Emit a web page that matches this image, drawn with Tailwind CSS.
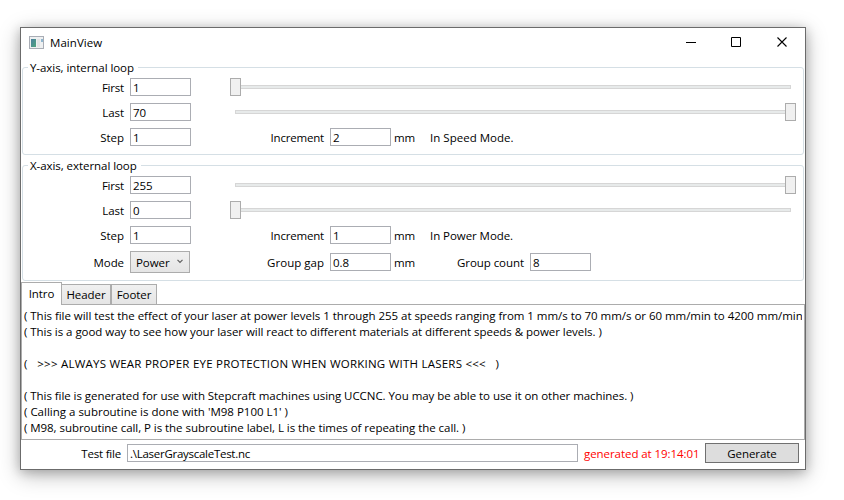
<!DOCTYPE html>
<html lang="en">
<head>
<meta charset="utf-8">
<title>MainView</title>
<script src="https://cdn.jsdelivr.net/npm/@tailwindcss/browser@4"></script>
</head>
<body class="bg-white w-[844px] h-[500px] overflow-hidden pt-[27px] pl-[20px] font-['Open_Sans','Noto_Sans',sans-serif] text-[11.5px] leading-[16px] tracking-[-0.06px] text-black">
<main class="w-[786px] h-[443px] border border-[#6b6b6b] bg-white flex flex-col shadow-[0_5px_20px_rgba(0,0,0,0.28),0_2px_10px_rgba(0,0,0,0.2)]">
  <header class="h-[32px] shrink-0 flex items-center pl-[8px]">
    <svg class="w-[15px] h-[13px] -mt-[4px]" viewBox="0 0 15 13"><defs><linearGradient id="g" x1="0" y1="0" x2="1" y2="1"><stop offset="0" stop-color="#4a7f9f"/><stop offset="1" stop-color="#4fa57c"/></linearGradient></defs><rect x=".5" y=".5" width="14" height="12" fill="#eef0f1" stroke="#a9adb5"/><rect x="2" y="3" width="5" height="8" fill="url(#g)"/><rect x="8" y="3" width="3" height="8" fill="#e2e4e5"/><rect x="12" y="3" width="2" height="3" fill="#8fb6cf"/></svg>
    <h1 class="ml-[6px] -mt-[2px] tracking-[0.05px]">MainView</h1>
    <div class="ml-auto mr-[17px] -mt-[4px] flex gap-[35px]">
      <svg class="w-[11px] h-[11px] -mr-px" viewBox="0 0 11 11"><path d="M0 5.5h10" stroke="#000"/></svg>
      <svg class="w-[11px] h-[11px]" viewBox="0 0 11 11"><path d="M.5 .5h9v9h-9z" fill="none" stroke="#000"/></svg>
      <svg class="w-[11px] h-[11px]" viewBox="0 0 11 11"><path d="M.5 .5l9 9M9.5 .5l-9 9" fill="none" stroke="#000" stroke-width="1.1"/></svg>
    </div>
  </header>

  <fieldset class="h-[95px] shrink-0 mx-[1px] border border-[#d5dfe5] rounded-[3px] min-w-0">
    <legend class="ml-[5px] w-[110px] h-[15px] pl-[2px] whitespace-nowrap">Y-axis, internal loop</legend>
    <div class="pt-[3px] flex flex-col gap-[7px]">
      <div class="flex items-center h-[18px]">
        <span class="w-[101px] pt-[2px] text-right tracking-[-0.2px]">First</span>
        <span class="ml-[6px] w-[61px] h-[18px] border border-[#abadb3] pl-[2px] leading-[17px]">1</span>
        <span class="ml-[39px] w-[566px] h-[18px] flex items-center"><i class="w-[11px] h-[18px] bg-[#f0f0f0] border border-[#acacac]"></i><i class="w-[550px] h-[4px] bg-[#e7eaea] border border-[#d6d6d6] border-l-0"></i></span>
      </div>
      <div class="flex items-center h-[18px]">
        <span class="w-[101px] pt-[2px] text-right">Last</span>
        <span class="ml-[6px] w-[61px] h-[18px] border border-[#abadb3] pl-[2px] leading-[17px]">70</span>
        <span class="ml-[39px] w-[566px] h-[18px] flex items-center justify-end"><i class="w-[550px] h-[4px] bg-[#e7eaea] border border-[#d6d6d6] border-r-0"></i><i class="w-[11px] h-[18px] bg-[#f0f0f0] border border-[#acacac]"></i></span>
      </div>
      <div class="flex items-center h-[18px]">
        <span class="w-[101px] pt-[2px] text-right">Step</span>
        <span class="ml-[6px] w-[61px] h-[18px] border border-[#abadb3] pl-[2px] leading-[17px]">1</span>
        <span class="w-[133px] pt-[2px] text-right tracking-[-0.2px]">Increment</span>
        <span class="ml-[6px] w-[61px] h-[18px] border border-[#abadb3] pl-[2px] leading-[17px]">2</span>
        <span class="pl-[3px] pt-[2px] w-[39px]">mm</span>
        <span class="pt-[2px] tracking-[0.02px]">In Speed Mode.</span>
      </div>
    </div>
  </fieldset>

  <fieldset class="h-[123px] shrink-0 mx-[1px] mt-[3px] border border-[#d5dfe5] rounded-[3px] min-w-0">
    <legend class="ml-[5px] w-[113px] h-[15px] pl-[2px] whitespace-nowrap">X-axis, external loop</legend>
    <div class="pt-[3px] flex flex-col gap-[7px]">
      <div class="flex items-center h-[18px]">
        <span class="w-[101px] pt-[2px] text-right tracking-[-0.2px]">First</span>
        <span class="ml-[6px] w-[61px] h-[18px] border border-[#abadb3] pl-[2px] leading-[17px]">255</span>
        <span class="ml-[39px] w-[566px] h-[18px] flex items-center justify-end"><i class="w-[550px] h-[4px] bg-[#e7eaea] border border-[#d6d6d6] border-r-0"></i><i class="w-[11px] h-[18px] bg-[#f0f0f0] border border-[#acacac]"></i></span>
      </div>
      <div class="flex items-center h-[18px]">
        <span class="w-[101px] pt-[2px] text-right">Last</span>
        <span class="ml-[6px] w-[61px] h-[18px] border border-[#abadb3] pl-[2px] leading-[17px]">0</span>
        <span class="ml-[39px] w-[566px] h-[18px] flex items-center"><i class="w-[11px] h-[18px] bg-[#f0f0f0] border border-[#acacac]"></i><i class="w-[550px] h-[4px] bg-[#e7eaea] border border-[#d6d6d6] border-l-0"></i></span>
      </div>
      <div class="flex items-center h-[18px]">
        <span class="w-[101px] pt-[2px] text-right">Step</span>
        <span class="ml-[6px] w-[61px] h-[18px] border border-[#abadb3] pl-[2px] leading-[17px]">1</span>
        <span class="w-[133px] pt-[2px] text-right tracking-[-0.2px]">Increment</span>
        <span class="ml-[6px] w-[61px] h-[18px] border border-[#abadb3] pl-[2px] leading-[17px]">1</span>
        <span class="pl-[3px] pt-[2px] w-[39px]">mm</span>
        <span class="pt-[2px]">In Power Mode.</span>
      </div>
      <div class="flex items-center h-[22px]">
        <span class="w-[101px] pt-[2px] text-right">Mode</span>
        <span class="ml-[6px] w-[60px] h-[22px] border border-[#acacac] bg-linear-to-b from-[#f0f0f0] to-[#e5e5e5] pl-[5px] pt-[2px] flex items-center">Power<svg class="ml-auto mr-[6px] mb-[4px] w-[6px] h-[5px]" viewBox="0 0 6 5"><path d="M.5 .8L3 3.4 5.5 .8" fill="none" stroke="#606060" stroke-width="1.2"/></svg></span>
        <span class="w-[134px] pt-[2px] text-right tracking-[0.02px]">Group gap</span>
        <span class="ml-[6px] w-[61px] h-[18px] border border-[#abadb3] pl-[2px] leading-[17px]">0.8</span>
        <span class="pl-[3px] pt-[2px] w-[39px]">mm</span>
        <span class="w-[94px] pt-[2px] text-right">Group count</span>
        <span class="ml-[6px] w-[61px] h-[18px] border border-[#abadb3] pl-[2px] leading-[17px]">8</span>
      </div>
    </div>
  </fieldset>

  <nav class="h-[23px] shrink-0 mt-[1px] flex items-end relative z-10">
    <span class="w-[41px] h-[23px] border border-b-0 border-[#acacac] bg-white text-center leading-[22px]">Intro</span>
    <span class="w-[50px] h-[20px] border border-b-0 border-[#acacac] -ml-px bg-linear-to-b from-[#f0f0f0] to-[#e5e5e5] text-center leading-[20px] mb-px">Header</span>
    <span class="w-[46px] h-[20px] border border-b-0 border-[#acacac] bg-linear-to-b from-[#f0f0f0] to-[#e5e5e5] text-center leading-[20px] mb-px">Footer</span>
  </nav>
  <section class="h-[136px] shrink-0 -mt-px border border-[#acacac] pt-[3px] pl-[2px] pr-[2px]">
    <div class="overflow-hidden *:whitespace-pre *:h-[16px]">
      <p class="tracking-[-0.035px]">( This file will test the effect of your laser at power levels 1 through 255 at speeds ranging from 1 mm/s to 70 mm/s or 60 mm/min to 4200 mm/min )</p>
      <p class="tracking-[-0.04px]">( This is a good way to see how your laser will react to different materials at different speeds &amp; power levels. )</p>
      <p></p>
      <p class="tracking-[0.23px]">(   &gt;&gt;&gt; ALWAYS WEAR PROPER EYE PROTECTION WHEN WORKING WITH LASERS &lt;&lt;&lt;   )</p>
      <p></p>
      <p class="tracking-[-0.055px]">( This file is generated for use with Stepcraft machines using UCCNC. You may be able to use it on other machines. )</p>
      <p class="tracking-[0px]">( Calling a subroutine is done with 'M98 P100 L1' )</p>
      <p class="tracking-[-0.05px]">( M98, subroutine call, P is the subroutine label, L is the times of repeating the call. )</p>
    </div>
  </section>
  <footer class="flex items-center h-[20px] mt-[3px] shrink-0">
    <span class="w-[100px] pt-[2px] text-right tracking-[-0.2px]">Test file</span>
    <span class="ml-[6px] w-[451px] h-[18px] border border-[#abadb3] pl-[2px] leading-[17px] tracking-[-0.27px]">.\LaserGrayscaleTest.nc</span>
    <span class="ml-[6px] pt-[2px] w-[121px] text-[#ff0000] whitespace-nowrap">generated at 19:14:01</span>
    <button class="w-[94px] h-[20px] pt-[2px] leading-[16px] border border-[#707070] bg-[#dddddd]">Generate</button>
  </footer>
</main>
</body>
</html>
